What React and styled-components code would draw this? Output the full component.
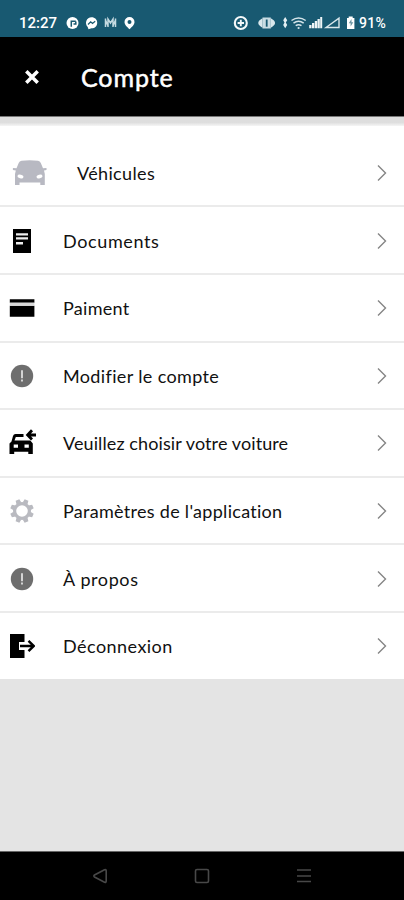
import styled, { createGlobalStyle } from "styled-components";

const ITEMS = [
  { label: "Véhicules", icon: "car", gap: 0.35, wide: true },
  { label: "Documents", icon: "doc", gap: 0.62 },
  { label: "Paiment", icon: "card", gap: 0.3 },
  { label: "Modifier le compte", icon: "alert", gap: 0.36 },
  { label: "Veuillez choisir votre voiture", icon: "swap", gap: 0.1 },
  { label: "Paramètres de l'application", icon: "gear", gap: 0.29 },
  { label: "À propos", icon: "alert", gap: 0.6 },
  { label: "Déconnexion", icon: "logout", gap: 0.46 },
];

const TEETH = [0, 45, 90, 135, 180, 225, 270, 315];

const ItemIcon = ({ name }) => {
  if (name === "car") {
    return (
      <svg width="36" height="26" viewBox="0 0 36 26">
        <path
          fill="#b8b9c2"
          d="M9.500.7q8-1 16.500 0 2 .3 2.800 2.300l2.200 5.200 3.500-.2v2l-2.500.6.800 3.400V25h-4.500v-2.500H7.500V25H3V14l.8-3.400L.9 10V8l3.600.2L6.700 3Q7.500 1 9.500.7z"
        />
        <ellipse cx="8.500" cy="16.500" rx="3" ry="1.800" fill="#fff" transform="rotate(15 8.500 16.500)" />
        <ellipse cx="27.500" cy="16.500" rx="3" ry="1.800" fill="#fff" transform="rotate(-15 27.500 16.500)" />
      </svg>
    );
  }
  if (name === "doc") {
    return (
      <svg width="26" height="26" viewBox="0 0 26 26">
        <path d="M4 1h18v24H4z" fill="#000" />
        <path d="M7 5.200h12v2.300H7zM7 9.300h12v2.300H7zM7 14h7v2.500H7z" fill="#eee" />
      </svg>
    );
  }
  if (name === "card") {
    return (
      <svg width="26" height="26" viewBox="0 0 26 26">
        <path d="M.8 4.200h24.600v3.500H.8zM.8 10.800h24.600v11H.8z" fill="#000" />
        <path d="M.8 7.700h24.600v3.100H.8z" fill="#d9d9d9" />
      </svg>
    );
  }
  if (name === "alert") {
    return (
      <svg width="26" height="26" viewBox="0 0 26 26">
        <circle cx="13" cy="13" r="11.200" fill="#6e6e6e" />
        <path d="M12.200 7.200h1.600v8h-1.600zM12.200 16.500h1.600v2h-1.600z" fill="#eee" />
      </svg>
    );
  }
  if (name === "swap") {
    return (
      <svg width="28" height="28" viewBox="0 0 28 28">
        <path
          d="M14.500 5H6.500Q4.600 5 4 7L2.500 12.500.5 14.500V25h4.700v-2.300h14.100V25h4.500V14.500l-2.500-3H5.500L6.800 8h7.700zM4.700 15.500h4.300v3.200H4.700zM15.500 15.500h4.300v3.200h-4.300z"
          fillRule="evenodd"
        />
        <path d="M27 6h-7.500M23 1.200L18.600 6l4.400 4.500" fill="none" stroke="#000" strokeWidth="2.800" />
      </svg>
    );
  }
  if (name === "gear") {
    return (
      <svg width="26" height="26" viewBox="0 0 26 26">
        <circle cx="13" cy="13" r="7.400" fill="none" stroke="#b9bac0" strokeWidth="3.200" />
        {TEETH.map((angle) => (
          <path
            key={angle}
            d="M10.400 5l.6-3.800h4l.6 3.800z"
            fill="#b9bac0"
            transform={`rotate(${angle + 22.5} 13 13)`}
          />
        ))}
      </svg>
    );
  }
  return (
    <svg width="26" height="26" viewBox="0 0 26 26">
      <path d="M1 1h14.500v8H10v8h5.500v8H1z" />
      <path d="M11 13h13.500M19.500 7.800l5.200 5.200-5.200 5.200" fill="none" stroke="#000" strokeWidth="2.400" />
    </svg>
  );
};

const NotificationIcons = () => (
  <svg width="72" height="16" viewBox="66 15 72 16">
    <circle cx="72.500" cy="23" r="6" fill="#fff" />
    <path d="M71.300 26.800v-5.600h4.500M73.500 24h2.300v-2.500" fill="none" stroke="#185971" strokeWidth="1.500" />
    <path
      d="M91.500 17.200c3.500 0 5.700 2.400 5.700 5.500s-2.200 5.600-5.700 5.600l-3 .9-.8-2.200c-3.600-4-1-9.800 3.800-9.800z"
      fill="#fff"
    />
    <path d="M88 24.500l2.700-2.700 1.800 1.700 2.700-2.200" fill="none" stroke="#185971" strokeWidth="1.200" />
    <path
      d="M105.500 18.500v8.500M108 27v-8l2.500 4 2.500-4v8M115.500 18.500v8.500M105.500 20l2.500 6M115.500 20l-2.500 6"
      fill="none"
      stroke="#c5dae1"
      strokeWidth="1.500"
    />
    <path
      fill="#fff"
      fillRule="evenodd"
      d="M129.500 17a5 5 0 015 5c0 3-2.800 5-5 7.300-2.200-2.300-5-4.300-5-7.300a5 5 0 015-5zm0 3a2 2 0 100 4 2 2 0 000-4z"
    />
  </svg>
);

const SystemIcons = () => (
  <svg width="124" height="16" viewBox="232 15 124 16">
    <circle cx="240.800" cy="23" r="6" fill="none" stroke="#f4f8f9" strokeWidth="2.100" />
    <path d="M240.800 19.800v6.400M237.600 23h6.400" stroke="#f4f8f9" strokeWidth="1.900" />
    <path d="M262.500 17.500h8.300v11h-8.300z" fill="#c9dce3" />
    <path d="M262.500 18.300q-8.500 4.700 0 9.400zM270.800 18.300q8.500 4.700 0 9.400z" fill="#d9e7ec" />
    <path d="M266.700 19.500v7.200" stroke="#185971" strokeWidth="1.800" />
    <path d="M285.200 17l2 3.300-1.400 2.200 1.400 2.500-2 3.300-2-3.300 1.300-2.500-1.300-2.200z" fill="#e4eff3" />
    <path
      d="M291.500 20.500q7.100-5.200 14.200 0M293.500 23.200q5.100-3.700 10.200 0M295.700 25.700q2.900-2 5.800 0"
      fill="none"
      stroke="#d5e5ea"
      strokeWidth="1.500"
    />
    <circle cx="298.600" cy="28" r="1.100" fill="#d5e5ea" />
    <path
      d="M309.200 25h2.300v3.200h-2.300zM312 23h2.300v5.200h-2.300zM314.800 21h2.300v7.200h-2.300zM317.500 19h2.300v9.200h-2.300zM320.200 17h2v11.200h-2z"
      fill="#eef5f7"
    />
    <path d="M326 27.500l13-9.300v9.300z" fill="none" stroke="#d9e7ec" strokeWidth="1.400" />
    <path d="M347 18h1.700v-1.500h4V18h1.700v11H347z" fill="#fff" />
    <path d="M351.500 19l-2.700 4.300h1.800v3.200l2.700-4.200h-1.800z" fill="#6a94a3" />
  </svg>
);

const App = () => {
  return (
    <Screen>
      <GlobalStyle />
      <StatusBar>
        <Clock>12:27</Clock>
        <NotificationIcons />
        <Spacer />
        <SystemIcons />
        <Battery>91%</Battery>
      </StatusBar>
      <Header>
        <CloseButton aria-label="Fermer">
          <svg width="16" height="16" viewBox="0 0 16 16">
            <path d="M2.300 2.300l11.400 11.400M13.700 2.300L2.300 13.700" stroke="#fff" strokeWidth="3.500" />
          </svg>
        </CloseButton>
        <Title>Compte</Title>
      </Header>
      <Shadow />
      <Menu>
        {ITEMS.map((item) => (
          <Item key={item.label}>
            <IconBox $wide={item.wide}>
              <ItemIcon name={item.icon} />
            </IconBox>
            <Label $gap={item.gap}>{item.label}</Label>
            <svg width="12" height="18" viewBox="0 0 12 18">
              <path d="M2 1.500L9.500 9 2 16.500" fill="none" stroke="#858585" strokeWidth="1.400" />
            </svg>
          </Item>
        ))}
      </Menu>
      <NavBar>
        <svg width="16" height="16" viewBox="0 0 16 16">
          <path d="M12.500 1.700L2.500 7q-1.300 1 0 2l10 5.300q1.700.5 1.700-1.200V2.900q0-1.700-1.700-1.200z" />
        </svg>
        <svg width="16" height="16" viewBox="0 0 16 16">
          <rect x="1.500" y="1.500" width="13" height="13" rx="1.500" />
        </svg>
        <svg width="16" height="16" viewBox="0 0 16 16">
          <path d="M1 2h14M1 8h14M1 13.500h14" />
        </svg>
      </NavBar>
    </Screen>
  );
};

const GlobalStyle = createGlobalStyle`
  * {
    box-sizing: border-box;
  }
  body {
    margin: 0;
    font-family: Lato, "Open Sans", sans-serif;
  }
  svg {
    display: block;
    flex-shrink: 0;
  }
`;
const Screen = styled.div`
  display: flex;
  flex-direction: column;
  height: 900px;
  background-color: #e4e4e4;
`;
const StatusBar = styled.div`
  display: flex;
  align-items: center;
  height: 37px;
  padding: 9px 16px 0 19px;
  background-color: #185971;
  color: #fff;
  font-family: Roboto, sans-serif;
`;
const Clock = styled.span`
  width: 47px;
  font-size: 15px;
  font-weight: 500;
`;
const Spacer = styled.div`
  flex: 1;
`;
const Battery = styled.span`
  width: 29px;
  margin-left: 3px;
  font-size: 14px;
  font-weight: 500;
  letter-spacing: 0.3px;
  white-space: nowrap;
`;
const Header = styled.header`
  display: flex;
  align-items: center;
  height: 79px;
  padding-left: 24px;
  background-color: #000;
`;
const CloseButton = styled.button`
  width: 16px;
  padding: 0;
  border: none;
  background: none;
`;
const Title = styled.h1`
  margin: 0 0 0 41px;
  font-size: 25px;
  font-weight: 400;
  line-height: 30px;
  letter-spacing: 0.9px;
  color: #fff;
  -webkit-text-stroke: 0.5px #fff;
`;
const Shadow = styled.div`
  height: 10px;
  border-top: 1px solid #777;
  background: linear-gradient(#dedede 60%, #f5f5f5);
`;
const Menu = styled.ul`
  margin: 0;
  padding: 0;
  list-style: none;
`;
const Item = styled.li`
  display: flex;
  align-items: center;
  height: 67.6px;
  padding: 1px 16px 0 9px;
  border-top: 2.6px solid #ebebeb;
  background-color: #fff;

  &:first-child {
    height: 79.4px;
    padding-top: 14px;
    border-top: none;
  }
`;
const IconBox = styled.div`
  width: ${({ $wide }) => ($wide ? "68px" : "54px")};
  padding-left: ${({ $wide }) => ($wide ? "3px" : "0")};
`;
const Label = styled.span`
  flex: 1;
  font-size: 18px;
  line-height: 24px;
  letter-spacing: ${({ $gap }) => $gap}px;
  white-space: nowrap;
  color: #111;
`;
const NavBar = styled.nav`
  display: flex;
  justify-content: space-between;
  height: 49px;
  margin-top: auto;
  padding: 16px 92px 0;
  border-top: 1px solid #666;
  background-color: #000;

  path,
  rect {
    fill: none;
    stroke: #484848;
    stroke-width: 1.6;
  }
`;

export default App;
